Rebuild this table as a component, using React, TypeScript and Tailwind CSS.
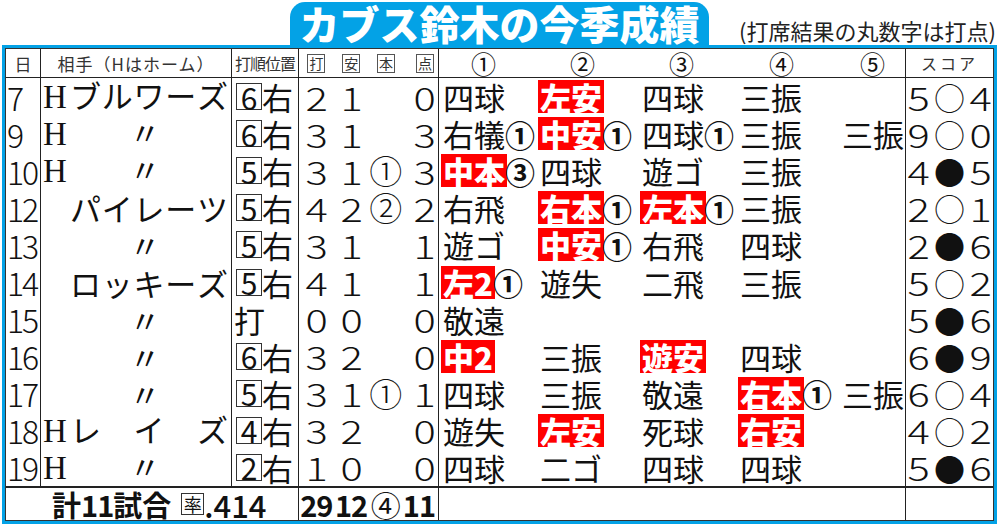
import React from "react";

type Res = { t: string; red?: boolean; rbi?: string };
type Row = {
  day: string;
  h?: boolean;
  name: string;
  pos: string;
  tally: string[];
  res: Res[];
  score: string[];
};

const rows: Row[] = [
  { day: "7", h: true, name: "ブルワーズ", pos: "6", tally: ["2", "1", "", "0"], res: [{ t: "四球" }, { t: "左安", red: true }, { t: "四球" }, { t: "三振" }], score: ["5", "○", "4"] },
  { day: "9", h: true, name: "〃", pos: "6", tally: ["3", "1", "", "3"], res: [{ t: "右犠", rbi: "①" }, { t: "中安", red: true, rbi: "①" }, { t: "四球", rbi: "①" }, { t: "三振" }, { t: "三振" }], score: ["9", "○", "0"] },
  { day: "10", h: true, name: "〃", pos: "5", tally: ["3", "1", "①", "3"], res: [{ t: "中本", red: true, rbi: "③" }, { t: "四球" }, { t: "遊ゴ" }, { t: "三振" }], score: ["4", "●", "5"] },
  { day: "12", name: "パイレーツ", pos: "5", tally: ["4", "2", "②", "2"], res: [{ t: "右飛" }, { t: "右本", red: true, rbi: "①" }, { t: "左本", red: true, rbi: "①" }, { t: "三振" }], score: ["2", "○", "1"] },
  { day: "13", name: "〃", pos: "5", tally: ["3", "1", "", "1"], res: [{ t: "遊ゴ" }, { t: "中安", red: true, rbi: "①" }, { t: "右飛" }, { t: "四球" }], score: ["2", "●", "6"] },
  { day: "14", name: "ロッキーズ", pos: "5", tally: ["4", "1", "", "1"], res: [{ t: "左2", red: true, rbi: "①" }, { t: "遊失" }, { t: "二飛" }, { t: "三振" }], score: ["5", "○", "2"] },
  { day: "15", name: "〃", pos: "打", tally: ["0", "0", "", "0"], res: [{ t: "敬遠" }], score: ["5", "●", "6"] },
  { day: "16", name: "〃", pos: "6", tally: ["3", "2", "", "0"], res: [{ t: "中2", red: true }, { t: "三振" }, { t: "遊安", red: true }, { t: "四球" }], score: ["6", "●", "9"] },
  { day: "17", name: "〃", pos: "5", tally: ["3", "1", "①", "1"], res: [{ t: "四球" }, { t: "三振" }, { t: "敬遠" }, { t: "右本", red: true, rbi: "①" }, { t: "三振" }], score: ["6", "○", "4"] },
  { day: "18", h: true, name: "レイズ", pos: "4", tally: ["3", "2", "", "0"], res: [{ t: "遊失" }, { t: "左安", red: true }, { t: "死球" }, { t: "右安", red: true }], score: ["4", "○", "2"] },
  { day: "19", h: true, name: "〃", pos: "2", tally: ["1", "0", "", "0"], res: [{ t: "四球" }, { t: "二ゴ" }, { t: "四球" }, { t: "四球" }], score: ["5", "●", "6"] },
];

const slotW = ["w-[97px]", "w-[102px]", "w-[98px]", "w-[102px]", "flex-1"];

function Boxed({ c }: { c: string }) {
  return (
    <span className="inline-flex w-[18px] h-[19px] border border-[#555] items-center justify-center text-[14px] leading-none">
      {c}
    </span>
  );
}

function DataRow({ r }: { r: Row }) {
  const isDitto = r.name === "〃";
  return (
    <div className="flex-1 flex">
      <div className="w-[35px] border-r border-[#222] flex items-center pl-[1px] text-[32px] leading-none tracking-[-2px] font-light">
        {r.day}
      </div>
      <div className="w-[191px] border-r border-[#222] flex items-center pl-[2px] pr-[3px] text-[31px] leading-none">
        <div className="flex items-baseline w-full">
          <span className="w-[27px] shrink-0 font-['Liberation_Serif',serif] text-[33px] leading-none">
            {r.h ? "H" : ""}
          </span>
          <span className={`flex-1 flex ${isDitto ? "justify-center pr-[8px]" : "justify-between"}`}>
            {Array.from(r.name).map((c, i) => (
              <span key={i}>{c}</span>
            ))}
          </span>
        </div>
      </div>
      <div className="w-[67px] border-r border-[#222] flex items-center pl-[4px]">
        {r.pos === "打" ? (
          <span className="text-[31px] leading-none -ml-[2px]">打</span>
        ) : (
          <>
            <span className="inline-flex w-[26px] h-[27px] border border-[#333] items-center justify-center text-[30px] leading-none">
              {r.pos}
            </span>
            <span className="text-[31px] leading-none">右</span>
          </>
        )}
      </div>
      <div className="w-[140px] border-r border-[#222] flex items-center">
        {r.tally.map((t, i) => (
          <div
            key={i}
            className={`w-[35px] flex ${i === 3 ? "justify-end pr-[5px]" : "justify-center"} ${i === 2 ? "text-[33px]" : "text-[32px]"} leading-none font-light`}
          >
            <span className={i === 2 ? "" : "inline-block scale-x-[1.3]"}>{t}</span>
          </div>
        ))}
      </div>
      <div className="w-[467px] border-r border-[#222] flex items-center pl-[4px]">
        {r.res.map((s, i) => (
          <div key={i} className={`${slotW[i]} flex items-center`}>
            {s.red ? (
              <span className="bg-[#ff0000] text-white font-black text-[31px] leading-none h-[33px] flex items-center px-[2px] -mx-[2px]">
                {s.t}
              </span>
            ) : (
              <span className="text-[31px] leading-none">{s.t}</span>
            )}
            {s.rbi ? <span className="text-[30px] leading-none font-bold">{s.rbi}</span> : null}
          </div>
        ))}
      </div>
      <div className="flex-1 flex items-center justify-between px-[4px] text-[32px] leading-none font-light">
        <span className="inline-block scale-x-[1.3]">{r.score[0]}</span>
        <span className="text-[31px]">{r.score[1]}</span>
        <span className="inline-block scale-x-[1.3]">{r.score[2]}</span>
      </div>
    </div>
  );
}

export default function App() {
  return (
    <div className="w-[1000px] h-[525px] bg-white overflow-hidden font-['Noto_Sans_CJK_JP',sans-serif] text-[#111]">
      <div className="h-[45px] flex items-end">
        <div className="ml-[290px] w-[419px] h-[43px] bg-[#03a2e6] rounded-t-[15px] flex items-center justify-center text-white font-black text-[40px] leading-[43px]">
          カブス鈴木の今季成績
        </div>
        <div className="ml-[30px] pb-[4px] text-[22px] leading-none text-[#222]">(打席結果の丸数字は打点)</div>
      </div>
      <div className="ml-[2px] w-[995px] h-[479px] border-[3px] border-[#03a2e6]">
        <div className="h-full border border-[#333] flex flex-col">
          {/* header */}
          <div className="h-[29px] border-b border-[#222] flex text-[#333]">
            <div className="w-[35px] border-r border-[#222] flex items-center justify-center text-[17px] leading-none">日</div>
            <div className="w-[191px] border-r border-[#222] flex items-center justify-center text-[17px] leading-none tracking-[1px]">
              相手（Hはホーム）
            </div>
            <div className="w-[67px] border-r border-[#222] flex items-center justify-center text-[16px] leading-none tracking-[-1px]">
              打順位置
            </div>
            <div className="w-[140px] border-r border-[#222] flex items-center">
              {["打", "安", "本", "点"].map((c, i) => (
                <div key={i} className={`w-[35px] flex ${i === 3 ? "justify-end pr-[4px]" : "justify-center"}`}>
                  <Boxed c={c} />
                </div>
              ))}
            </div>
            <div className="w-[467px] border-r border-[#222] flex items-center pl-[4px] text-[25px] leading-none text-[#111]">
              {["①", "②", "③", "④", "⑤"].map((c, i) => (
                <div key={i} className={`${slotW[i]} ${i === 4 ? "pl-[18px]" : i === 1 ? "pl-[30px]" : i === 2 ? "pl-[27px]" : i === 3 ? "pl-[29px]" : "pl-[28px]"}`}>
                  {c}
                </div>
              ))}
            </div>
            <div className="flex-1 flex items-center justify-center text-[16px] leading-none tracking-[3px]">スコア</div>
          </div>
          {/* data */}
          <div className="h-[408px] flex flex-col">
            {rows.map((r, i) => (
              <DataRow key={i} r={r} />
            ))}
          </div>
          {/* total */}
          <div className="flex-1 border-t-2 border-[#222] flex">
            <div className="w-[293px] border-r border-[#222] flex items-center pl-[46px] font-bold text-[29px] leading-none">
              <span>計</span>
              <span className="tracking-[-1px]">11</span>
              <span>試合</span>
              <span className="ml-[10px] inline-flex w-[23px] h-[22px] border border-[#333] items-center justify-center text-[18px] font-normal">率</span>
              <span className="font-medium text-[31px]">.414</span>
            </div>
            <div className="w-[140px] border-r border-[#222] flex items-center font-bold text-[29px] leading-none">
              <div className="w-[35px] flex justify-center tracking-[-1px]">29</div>
              <div className="w-[35px] flex justify-center tracking-[-1px]">12</div>
              <div className="w-[35px] flex justify-center font-normal text-[30px]">④</div>
              <div className="w-[35px] flex justify-end pr-[3px] tracking-[-1px]">11</div>
            </div>
            <div className="w-[467px] border-r border-[#222]"></div>
            <div className="flex-1"></div>
          </div>
        </div>
      </div>
    </div>
  );
}
